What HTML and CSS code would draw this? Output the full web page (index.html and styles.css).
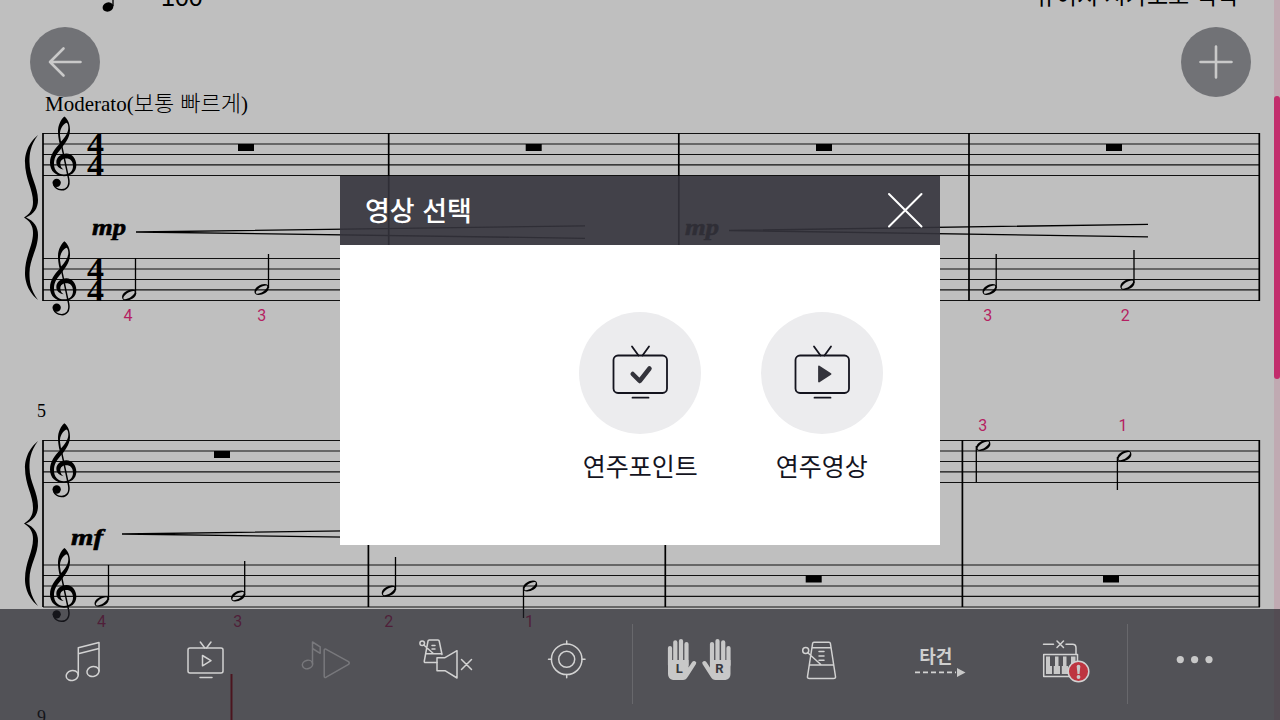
FILE: index.html
```
<!DOCTYPE html>
<html lang="ko">

<head>
    <meta charset="UTF-8">
    <meta name="viewport" content="width=device-width, initial-scale=1.0">
    <title>영상 선택</title>
    <link rel="stylesheet" href="styles.css">
</head>

<body>
    <div class="screen">
        <!-- Sheet music -->
        <svg class="score" width="1280" height="720" viewBox="0 0 1280 720">
            <defs>
                <g id="clef">
                    <g transform="scale(0.3333)">
                        <path fill-rule="evenodd" d="M43 0C54 8 61 24 60 42C59 66 44 82 32 98C18 114 12 126 12 142C12 162 24 174 42 174C60 174 69 164 69 148C69 134 61 126 49 126C38 126 31 132 31 141C31 150 35 156 41 159C29 157 19 149 19 137C19 122 33 111 49 111C67 111 79 127 79 146C79 167 62 179 42 179C17 179 0 164 0 139C0 115 14 98 29 82C26 70 24 56 24 46C24 26 32 10 43 0ZM49 19C39 23 29 38 30 56L33 76C46 62 55 48 55 34C55 26 53 20 49 19Z" />
                        <path class="clef-stem" d="M32 74L56 187C60 208 50 221 34 220C22 219 14 212 11 204" />
                        <circle cx="20" cy="199" r="12.5" />
                    </g>
                </g>
                <path id="brace" d="M38 0C26 10 25 22 25 27C25 44 33 54 33 67C33 74 30 79 24 82.500C30 86 33 91 33 98C33 111 25 121 25 138C25 143 26 155 38 165C30 154 29.500 146 29.500 138C29.500 124 38 114 38 100C38 92 34 86 26 82.500C34 79 38 73 38 65C38 51 29.500 41 29.500 27C29.500 19 30 11 38 0Z" />
                <path id="head" fill-rule="evenodd" d="M-7 2C-7 -2 -1 -5.400 3 -5.400C6 -5.400 7.200 -4 7.200 -1.500C7.200 2.500 1.500 5.400 -3 5.400C-5.700 5.400 -7 4 -7 2ZM-5.600 3.200C-5.400 5 -1.500 4.200 1.800 2C5 -.2 6.300 -2.600 5.700 -3.500C5 -4.600 .5 -3.500 -2.200 -1.600C-4.800 .3 -5.800 2 -5.600 3.200Z" />
                <path id="staff" d="M43 0H1260M43 10.500H1260M43 21H1260M43 31.300H1260M43 42H1260" />
                <rect id="rest" width="16" height="7" />
            </defs>

            <!-- Heading -->
            <ellipse cx="108" cy="7" rx="5.500" ry="4.500" transform="rotate(-20 108 7)" />
            <path class="stem" d="M113 0V6" />
            <text class="tempo" x="161" y="6">100</text>
            <text class="composer" x="1238" y="4" text-anchor="end">뮤이지 시가포로 턱턱</text>
            <text class="mark" x="45" y="111">Moderato(<tspan class="mark-ko">보통 빠르게</tspan>)</text>

            <!-- First system -->
            <use href="#brace" y="135" />
            <use href="#staff" class="staff" y="133.500" />
            <use href="#staff" class="staff" y="258.500" />
            <path class="bar" d="M43 133V301M388.700 133V301M678.800 133V301M969 133V301M1259.300 133V301" />
            <use href="#clef" x="50" y="116.500" />
            <use href="#clef" x="50" y="241.300" />
            <text class="meter" x="87" y="154.500" textLength="17" lengthAdjust="spacingAndGlyphs">4</text>
            <text class="meter" x="87" y="175.500" textLength="17" lengthAdjust="spacingAndGlyphs">4</text>
            <text class="meter" x="87" y="279.500" textLength="17" lengthAdjust="spacingAndGlyphs">4</text>
            <text class="meter" x="87" y="300.500" textLength="17" lengthAdjust="spacingAndGlyphs">4</text>
            <use href="#rest" x="238" y="144" />
            <use href="#rest" x="525.700" y="144" />
            <use href="#rest" x="816" y="144" />
            <use href="#rest" x="1106" y="144" />
            <text class="dynamic" x="92" y="234.500" textLength="34" lengthAdjust="spacingAndGlyphs">mp</text>
            <text class="dynamic" x="685" y="234.500" textLength="34" lengthAdjust="spacingAndGlyphs">mp</text>
            <path class="hairpin" d="M585 225.800L136 232L585 238.300M1148 224.300L729 230.500L1148 236.900" />
            <use href="#head" x="129" y="295" />
            <use href="#head" x="261.500" y="289.500" />
            <use href="#head" x="989.500" y="289.500" />
            <use href="#head" x="1127.300" y="284.500" />
            <path class="stem" d="M135.500 258V294M268.500 254V288M996.200 254V288M1134 250V283" />
            <g class="finger">
                <text x="128" y="320.500">4</text>
                <text x="261.700" y="320.500">3</text>
                <text x="987.700" y="320.500">3</text>
                <text x="1125.300" y="320.500">2</text>
            </g>

            <!-- Second system -->
            <text class="measure" x="37" y="417">5</text>
            <use href="#brace" y="441" />
            <use href="#staff" class="staff" y="440.500" />
            <use href="#staff" class="staff" y="565" />
            <path class="bar" d="M43 440V607M368.400 440V607M665.300 440V607M962.400 440V607M1259.300 440V607" />
            <use href="#clef" x="50" y="423.200" />
            <use href="#clef" x="50" y="548" />
            <use href="#rest" x="214" y="451" />
            <use href="#rest" x="805.700" y="575.500" />
            <use href="#rest" x="1103" y="575.500" />
            <text class="dynamic" x="71" y="545" textLength="32" lengthAdjust="spacingAndGlyphs">mf</text>
            <path class="hairpin" d="M560 528L122 534L560 540" />
            <use href="#head" x="101.500" y="601.300" />
            <use href="#head" x="238" y="596" />
            <use href="#head" x="388.700" y="591" />
            <use href="#head" x="530" y="586" />
            <use href="#head" x="983.200" y="445.500" />
            <use href="#head" x="1124.200" y="456" />
            <path class="stem" d="M108.500 565V600M244.700 561V595M395.500 557V590M523.500 587V618M976.300 446V482M1117.400 457V490" />
            <g class="finger">
                <text x="982.700" y="431">3</text>
                <text x="1123" y="431">1</text>
                <text x="101.500" y="627">4</text>
                <text x="237.700" y="627">3</text>
                <text x="388.700" y="627">2</text>
                <text x="529.500" y="627">1</text>
            </g>

            <text class="measure" x="37" y="723">9</text>
            <path class="cursor" d="M231.500 674V720" />
        </svg>

        <div class="scrollbar">
            <div class="thumb"></div>
        </div>

        <button class="round back" aria-label="뒤로">
            <svg width="70" height="70" viewBox="0 0 70 70"><path d="M50.500 35H20M33.500 21.500L20 35L33.500 48.500" /></svg>
        </button>
        <button class="round add" aria-label="추가">
            <svg width="70" height="70" viewBox="0 0 70 70"><path d="M19.500 35H50.500M35 19.500V50.500" /></svg>
        </button>

        <!-- Bottom toolbar -->
        <div class="toolbar">
            <svg class="tool" viewBox="24 9 121 111">
                <path d="M78.300 75V47.800L99 42.500V71M78.300 53.700L99 48.500" />
                <ellipse cx="72.200" cy="75.500" rx="6.100" ry="5" transform="rotate(-15 72.200 75.500)" />
                <ellipse cx="93" cy="71.500" rx="6.100" ry="5" transform="rotate(-15 93 71.500)" />
            </svg>
            <svg class="tool" viewBox="145 9 121 111">
                <rect x="188" y="48" width="35" height="25" rx="2" />
                <path d="M200.300 42L204.800 48M211 42L206.500 48M202.500 55.500L211 60.700L202.500 65.800ZM200 77.500H212" />
            </svg>
            <svg class="tool off" viewBox="266 9 121 111">
                <ellipse cx="307.500" cy="64.500" rx="5.200" ry="4.200" transform="rotate(-15 307.500 64.500)" />
                <path d="M312.500 64V42L320.200 46.800V53.300L312.500 48.500M326.200 49.300L348.500 61.600Q350 63 348.500 64.400L326.200 77.200Q324.200 78 324.200 76V50.500Q324.200 48.500 326.200 49.300Z" />
            </svg>
            <svg class="tool" viewBox="387 9 121 111">
                <path d="M437 62.600H425.500Q424 62.600 424.300 61L428 41Q428.200 40 429.300 40H438Q439 40 439.200 41L442 54.500M426 53.700H442M423.800 45L433.300 53.500M432 45.500H435M432 49H435" />
                <circle cx="422.200" cy="43.200" r="2.300" />
                <path d="M437 57.700H445L457 50.700V78L445 70.700H437ZM461.500 59.500L471.500 69.500M471.500 59.500L461.500 69.500" />
            </svg>
            <svg class="tool" viewBox="508 9 121 111">
                <circle cx="566.700" cy="59.300" r="15.300" />
                <circle cx="566.700" cy="59.300" r="8" />
                <path d="M566.700 41V44M566.700 74.500V77.700M548.500 59.300H551.500M582 59.300H585" />
            </svg>

            <div class="divider"></div>

            <svg class="tool wide" viewBox="638 9 122 111">
                <g id="hand">
                    <path class="fingers" d="M670 48V65M675.300 42.300V65M681 41V65M686.500 44V65" />
                    <path class="solid" d="M668 60H688.500V67.500L691.800 62.500Q693 60.800 695 61.200Q697 62 696 64L688 76.500Q686 80 683 80H673Q668 79 668 74Z" />
                </g>
                <use href="#hand" transform="translate(1398.500 0) scale(-1 1)" />
                <text class="hand-label" x="679.300" y="73.300">L</text>
                <text class="hand-label" x="719.300" y="73.300">R</text>
            </svg>
            <svg class="tool wide" viewBox="760 9 122 111">
                <path d="M814 42.300H829Q830.200 42.300 830.400 43.500L835.500 76.500Q835.800 78.600 833.500 78.600H809.500Q807.200 78.600 807.500 76.500L812.600 43.500Q812.800 42.300 814 42.300ZM812.500 47.800H831M809.500 65H833.500M807.800 52.700L820.800 64.500M819 51.500H824M819 56H824M819 60.200H824" />
                <circle cx="805.700" cy="50.500" r="3" />
            </svg>
            <svg class="tool wide" viewBox="882 9 122 111">
                <text class="tool-label" x="935.800" y="63">타건</text>
                <path class="dashed" d="M915 72.400H956" />
                <path class="solid" d="M957 68L965.500 72.400L957 77Z" />
            </svg>
            <svg class="tool wide" viewBox="1004 9 122 111">
                <path d="M1043.500 44.300H1053.500M1057 41L1063.500 47.500M1063.500 41L1057 47.500M1066 44.300H1072.500Q1076 44.300 1076 48V54M1043.700 54.500H1077.500V76.500H1043.700Z" />
                <path class="solid" d="M1046 56.500H1050V66H1052V74H1046ZM1055 56.500H1058.500V66H1060V74H1053.700V66H1055ZM1063 56.500H1066.500V66H1068V74H1061.800V66H1063ZM1071 56.500H1075.500V74H1070V66H1071Z" />
                <circle class="alert" cx="1078.500" cy="71.500" r="10.300" />
                <path class="solid" d="M1076.700 66.500Q1076.700 64.700 1078.500 64.700Q1080.300 64.700 1080.300 66.500L1079.500 74H1077.500Z" />
                <circle class="solid" cx="1078.500" cy="77" r="1.900" />
            </svg>

            <div class="divider last"></div>

            <svg class="tool more" viewBox="1128 9 134 111">
                <circle class="solid" cx="1180.300" cy="59.600" r="3.600" />
                <circle class="solid" cx="1194.600" cy="59.600" r="3.600" />
                <circle class="solid" cx="1209" cy="59.600" r="3.600" />
            </svg>
        </div>

        <!-- Video picker -->
        <div class="modal">
            <div class="modal-header">
                <span class="modal-title">영상 선택</span>
                <svg class="close" width="36" height="36" viewBox="0 0 36 36"><path d="M2 2L34.500 34.500M34.500 2L2 34.500" /></svg>
            </div>
            <div class="modal-body">
                <div class="option">
                    <div class="option-icon">
                        <svg width="60" height="60" viewBox="0 0 60 60">
                            <rect x="3.500" y="12.500" width="53.500" height="37.500" rx="4.500" />
                            <path d="M22 3.500L28.500 12.500M39 3.500L32.500 12.500M22.500 54.700H38.500" />
                            <path class="check" d="M22.700 31L29.700 38L39.500 25.500" />
                        </svg>
                    </div>
                    <span>연주포인트</span>
                </div>
                <div class="option">
                    <div class="option-icon">
                        <svg width="60" height="60" viewBox="0 0 60 60">
                            <rect x="3.500" y="12.500" width="53.500" height="37.500" rx="4.500" />
                            <path d="M22 3.500L28.500 12.500M39 3.500L32.500 12.500M22.500 54.700H38.500" />
                            <path class="play" d="M27 23.500L38.500 31L27 38.500Z" />
                        </svg>
                    </div>
                    <span>연주영상</span>
                </div>
            </div>
        </div>
    </div>
</body>

</html>
```
FILE: styles.css
```
body {
    margin: 0;
    font-family: "Noto Sans CJK KR", sans-serif;
}

.screen {
    position: relative;
    width: 1280px;
    height: 720px;
    overflow: hidden;
    background: #bfbfbf;
}

/* score */
.score {
    display: block;
}

.staff {
    fill: none;
    stroke: #111;
    stroke-width: 1.2;
}

.bar {
    stroke: #000;
    stroke-width: 1.7;
}

.stem {
    stroke: #000;
    stroke-width: 1.3;
}

.hairpin {
    fill: none;
    stroke: #000;
    stroke-width: 1.3;
}

.clef-stem {
    fill: none;
    stroke: #000;
    stroke-width: 4.5;
}

.cursor {
    stroke: #a80010;
    stroke-width: 2;
}

.tempo {
    font-family: "Liberation Sans", sans-serif;
    font-size: 25px;
}

.composer {
    font-size: 23px;
}

.mark {
    font-family: "Liberation Serif", serif;
    font-size: 21px;
}

.mark-ko {
    font-family: "Noto Sans CJK KR", sans-serif;
    font-size: 22px;
    font-weight: 300;
}

.meter {
    font-family: "Liberation Serif", serif;
    font-size: 30.5px;
    font-weight: bold;
}

.dynamic {
    font-family: "Liberation Serif", serif;
    font-size: 24px;
    font-weight: bold;
    font-style: italic;
    stroke: #000;
    stroke-width: 0.6;
}

.measure {
    font-family: "Liberation Serif", serif;
    font-size: 18px;
}

.finger {
    font-family: Roboto, sans-serif;
    font-size: 16px;
    text-anchor: middle;
    fill: #b51f62;
}

/* scrollbar */
.scrollbar {
    position: absolute;
    top: 0;
    right: 0;
    width: 6px;
    height: 720px;
    background: #c0aab2;
}

.thumb {
    height: 283px;
    margin-top: 96px;
    border-radius: 3px;
    background: #c22d6c;
}

/* round buttons */
.round {
    position: absolute;
    top: 27px;
    width: 70px;
    height: 70px;
    padding: 0;
    border: none;
    border-radius: 50%;
    background: rgba(98, 99, 104, 0.83);
}

.round svg {
    display: block;
    fill: none;
    stroke: #c9c9c9;
    stroke-width: 2.6;
    stroke-linecap: round;
    stroke-linejoin: round;
}

.back {
    left: 30px;
}

.add {
    left: 1181px;
}

/* toolbar */
.toolbar {
    position: absolute;
    left: 0;
    bottom: 0;
    display: flex;
    box-sizing: border-box;
    width: 1280px;
    height: 111px;
    padding-left: 24px;
    background: rgba(31, 31, 38, 0.68);
}

.tool {
    flex: none;
    width: 121px;
    height: 111px;
    fill: none;
    stroke: #d2d2d2;
    stroke-width: 1.5;
    stroke-linecap: round;
    stroke-linejoin: round;
}

.wide {
    width: 122px;
}

.more {
    width: 134px;
}

.off {
    stroke: #78787c;
}

.solid {
    fill: #c8c8c8;
    stroke: none;
}

.fingers {
    stroke: #c8c8c8;
    stroke-width: 4.2;
}

.hand-label {
    font-family: Roboto, sans-serif;
    font-size: 13px;
    font-weight: bold;
    text-anchor: middle;
    fill: #38383d;
    stroke: none;
}

.tool-label {
    font-size: 18px;
    font-weight: bold;
    text-anchor: middle;
    fill: #cfcfcf;
    stroke: none;
}

.dashed {
    stroke-width: 1.8;
    stroke-dasharray: 5 3;
    stroke-linecap: butt;
}

.alert {
    fill: #be3540;
}

.divider {
    width: 1px;
    height: 80px;
    margin: 15px 5px 0 3px;
    background: #68686c;
}

.last {
    margin: 15px 0 0 1px;
}

/* modal */
.modal {
    position: absolute;
    left: 340px;
    top: 176px;
    width: 600px;
}

.modal-header {
    display: flex;
    justify-content: space-between;
    align-items: center;
    height: 69px;
    padding: 0 17px 2px 25px;
    background: rgba(52, 51, 60, 0.9);
}

.modal-title {
    font-size: 27px;
    font-weight: 500;
    line-height: 36px;
    color: #fff;
}

.close {
    fill: none;
    stroke: #fff;
    stroke-width: 2;
    stroke-linecap: round;
}

.modal-header,
.modal-body {
    box-sizing: border-box;
}

.modal-body {
    display: flex;
    justify-content: flex-end;
    height: 300px;
    padding: 67px 27.5px 0 0;
    background: #fff;
}

.option {
    display: flex;
    flex-direction: column;
    align-items: center;
    gap: 14px;
    width: 181.5px;
    font-size: 25px;
    line-height: 35px;
    color: #14141e;
}

.option-icon {
    display: flex;
    justify-content: center;
    align-items: center;
    width: 122px;
    height: 122px;
    border-radius: 50%;
    background: #ececee;
}

.option-icon svg {
    fill: none;
    stroke: #14141e;
    stroke-width: 1.8;
    stroke-linecap: round;
}

.option-icon .check {
    stroke: #33333b;
    stroke-width: 4.5;
    stroke-linejoin: round;
}

.option-icon .play {
    fill: #33333b;
    stroke: #33333b;
    stroke-linejoin: round;
}
```
